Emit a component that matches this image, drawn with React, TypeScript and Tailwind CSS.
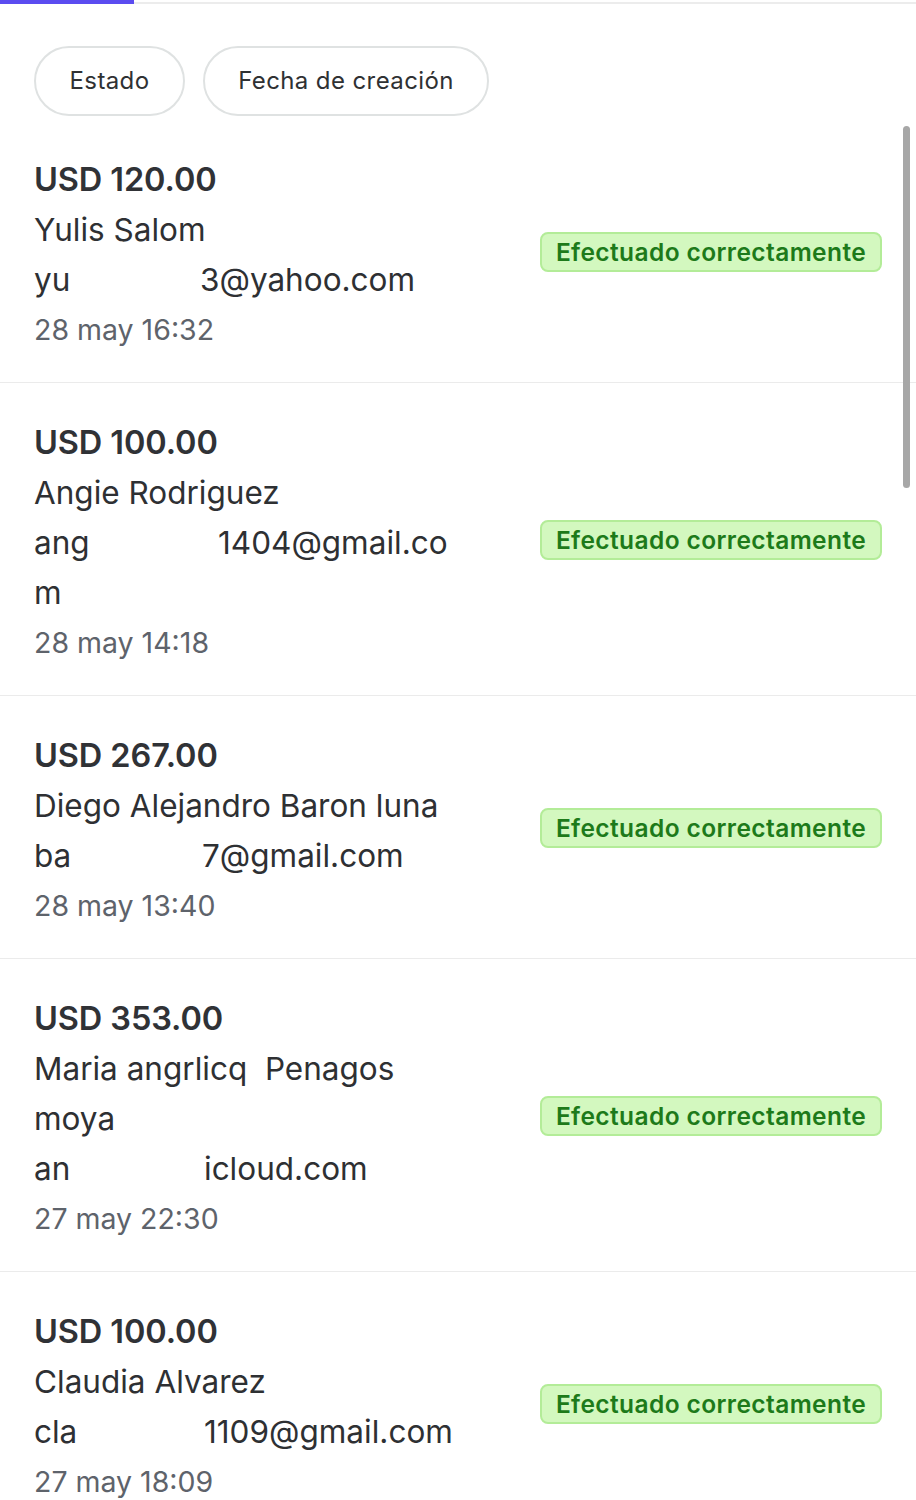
import React from "react";

type Item = {
  amount: string;
  nameLines: string[];
  prefix: string;
  prefixW: string;
  suffix: string;
  extra?: string;
  date: string;
};

const items: Item[] = [
  { amount: "USD 120.00", nameLines: ["Yulis Salom"], prefix: "yu", prefixW: "w-[166px]", suffix: "3@yahoo.com", date: "28 may 16:32" },
  { amount: "USD 100.00", nameLines: ["Angie Rodriguez"], prefix: "ang", prefixW: "w-[184px]", suffix: "1404@gmail.co", extra: "m", date: "28 may 14:18" },
  { amount: "USD 267.00", nameLines: ["Diego Alejandro Baron luna"], prefix: "ba", prefixW: "w-[168px]", suffix: "7@gmail.com", date: "28 may 13:40" },
  { amount: "USD 353.00", nameLines: ["Maria angrlicq  Penagos", "moya"], prefix: "an", prefixW: "w-[170px]", suffix: "icloud.com", date: "27 may 22:30" },
  { amount: "USD 100.00", nameLines: ["Claudia Alvarez"], prefix: "cla", prefixW: "w-[170px]", suffix: "1109@gmail.com", date: "27 may 18:09" },
];

function Row({ it }: { it: Item }) {
  return (
    <div className="flex items-center justify-between border-b border-[#ebebeb] pl-[34px] pr-[34px] pt-[35px] pb-[27px]">
      <div className="flex flex-col">
        <div className="h-[50px] leading-[50px] text-[32.5px] font-semibold text-[#303236] tracking-[-0.1px]">{it.amount}</div>
        {it.nameLines.map((n, i) => (
          <div key={i} className="h-[50px] leading-[50px] text-[31.5px] text-[#2e3033] whitespace-pre">{n}</div>
        ))}
        <div className="flex h-[50px] leading-[50px] text-[31.5px] text-[#2e3033] whitespace-pre">
          <span className={`${it.prefixW} overflow-hidden`}>{it.prefix}</span>
          <span>{it.suffix}</span>
        </div>
        {it.extra && <div className="h-[50px] leading-[50px] text-[31.5px] text-[#2e3033]">{it.extra}</div>}
        <div className="h-[50px] leading-[50px] text-[28.5px] text-[#5e636b]">{it.date}</div>
      </div>
      <div className="mb-[6px] flex h-[40px] w-[342px] items-center justify-center rounded-[8px] border-2 border-[#b3ec98] bg-[#d3f8bf] text-[24.5px] font-semibold text-[#1d7a1a] tracking-[0.4px]">
        Efectuado correctamente
      </div>
    </div>
  );
}

export default function App() {
  return (
    <div className="relative w-[916px] h-[1500px] overflow-hidden bg-white" style={{ fontFamily: "Inter, 'Noto Sans', sans-serif" }}>
      <div className="flex h-[4px]">
        <div className="w-[134px] h-[4px] bg-[#5b4cf0]" />
        <div className="flex-1 border-b-2 border-[#ececec]" />
      </div>
      <div className="flex gap-[18px] pl-[34px] pt-[42px] pb-[4px]">
        <div className="flex h-[70px] w-[151px] items-center justify-center rounded-full border-2 border-[#dfe2e2] text-[24px] text-[#2f3133] tracking-[0.4px]">Estado</div>
        <div className="flex h-[70px] w-[286px] items-center justify-center rounded-full border-2 border-[#dfe2e2] text-[24px] text-[#2f3133] tracking-[0.4px]">Fecha de creación</div>
      </div>
      {items.map((it, i) => (
        <Row key={i} it={it} />
      ))}
      <div className="absolute left-[903px] top-[126px] h-[362px] w-[7px] rounded-full bg-[#a7a7a7]" />
    </div>
  );
}
